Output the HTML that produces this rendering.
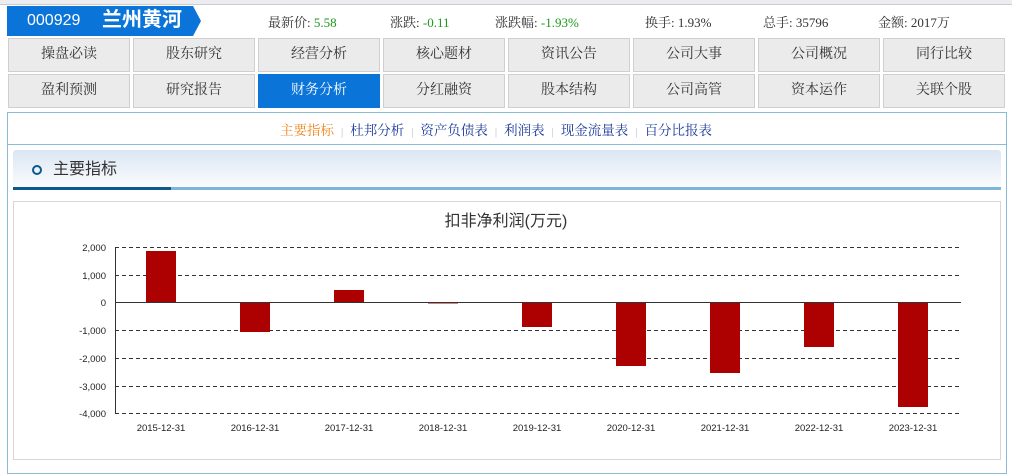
<!DOCTYPE html>
<html><head><meta charset="utf-8"><style>
*{margin:0;padding:0;box-sizing:border-box}
body{width:1012px;height:472px;background:#fff;font-family:"Liberation Serif","Noto Serif CJK SC",serif;position:relative;overflow:hidden}
.abs{position:absolute}
.top{left:0;top:0;width:1012px;height:5px;background:#ebedf0;border-bottom:1px solid #ccc}
.code{left:7px;top:6px;height:30px;width:186px;background:#0b74d8;color:#fff}
.arrow{left:193px;top:6px;width:0;height:0;border-top:15px solid transparent;border-bottom:15px solid transparent;border-left:8px solid #0b74d8}
.stat{top:12px;font-size:13px;color:#333}
.g{color:#1a9a1a}
.tab{width:122px;height:34px;background:#ebebeb;border:1px solid #cfcfcf;font-size:14px;color:#333;text-align:center;line-height:32px;font-family:"Liberation Serif","Noto Serif CJK SC",serif}
.tab.on{background:#0b74d8;color:#fff;border-color:#0b74d8}
.sub{font-size:13.5px;color:#1b3a9a;font-family:"Liberation Serif","Noto Serif CJK SC",serif}
.sep{color:#bbb;margin:0 7px;font-size:11px}
</style></head><body>
<div class="abs top"></div>
<div class="abs code"><span class="abs" style="left:20px;top:4px;line-height:22px;font-size:16px;font-family:'Liberation Sans',sans-serif">000929</span><span class="abs" style="left:95px;top:1px;line-height:26px;font-size:20px;font-weight:bold;font-family:'Liberation Sans','Noto Sans CJK SC',sans-serif">兰州黄河</span></div>
<div class="abs arrow"></div>
<div class="abs stat" style="left:268px">最新价: <span class="g">5.58</span></div>
<div class="abs stat" style="left:390px">涨跌: <span class="g">-0.11</span></div>
<div class="abs stat" style="left:495px">涨跌幅: <span class="g">-1.93%</span></div>
<div class="abs stat" style="left:645px">换手: 1.93%</div>
<div class="abs stat" style="left:763px">总手: 35796</div>
<div class="abs stat" style="left:878px">金额: 2017万</div>

<div class="abs tab" style="left:8px;top:38px">操盘必读</div>
<div class="abs tab" style="left:133px;top:38px">股东研究</div>
<div class="abs tab" style="left:258px;top:38px">经营分析</div>
<div class="abs tab" style="left:383px;top:38px">核心题材</div>
<div class="abs tab" style="left:508px;top:38px">资讯公告</div>
<div class="abs tab" style="left:633px;top:38px">公司大事</div>
<div class="abs tab" style="left:758px;top:38px">公司概况</div>
<div class="abs tab" style="left:883px;top:38px">同行比较</div>
<div class="abs tab" style="left:8px;top:74px">盈利预测</div>
<div class="abs tab" style="left:133px;top:74px">研究报告</div>
<div class="abs tab on" style="left:258px;top:74px">财务分析</div>
<div class="abs tab" style="left:383px;top:74px">分红融资</div>
<div class="abs tab" style="left:508px;top:74px">股本结构</div>
<div class="abs tab" style="left:633px;top:74px">公司高管</div>
<div class="abs tab" style="left:758px;top:74px">资本运作</div>
<div class="abs tab" style="left:883px;top:74px">关联个股</div>

<div class="abs" style="left:7px;top:112px;width:1000px;height:362px;border:1px solid #8bbcd6"></div>
<div class="abs" style="left:8px;top:144px;width:998px;height:1px;background:#8bbcd6"></div>
<div class="abs sub" style="left:280px;top:119px"><span style="color:#f08519">主要指标</span><span class="sep">|</span>杜邦分析<span class="sep">|</span>资产负债表<span class="sep">|</span>利润表<span class="sep">|</span>现金流量表<span class="sep">|</span>百分比报表</div>

<div class="abs" style="left:13px;top:150px;width:988px;height:38px;background:linear-gradient(#dbe6f3,#fbfcfe);border-radius:3px 3px 0 0"></div>
<div class="abs" style="left:13px;top:187px;width:988px;height:3px;background:#7fb5d8"></div>
<div class="abs" style="left:13px;top:187px;width:158px;height:3px;background:#0a5a8e"></div>
<div class="abs" style="left:32px;top:165px;width:10px;height:10px;border:2px solid #0a5a8e;border-radius:50%"></div>
<div class="abs" style="left:53px;top:159px;line-height:22px;font-size:16px;color:#333;font-family:'Liberation Sans','Noto Sans CJK SC',sans-serif">主要指标</div>

<div class="abs" style="left:13px;top:201px;width:988px;height:259px;border:1px solid #d6d6d6"></div>
<svg class="abs" style="left:0;top:0" width="1012" height="472" font-family="Liberation Sans, sans-serif">
<text x="506" y="226" font-size="16" text-anchor="middle" fill="#333" font-family="Liberation Sans, Noto Sans CJK SC, sans-serif">扣非净利润(万元)</text>
<g stroke="#333" stroke-width="1" stroke-dasharray="4,3">
<line x1="115" y1="247.5" x2="960" y2="247.5"/><line x1="115" y1="275.5" x2="960" y2="275.5"/>
<line x1="115" y1="330.5" x2="960" y2="330.5"/><line x1="115" y1="358.5" x2="960" y2="358.5"/>
<line x1="115" y1="386.5" x2="960" y2="386.5"/><line x1="115" y1="413.5" x2="960" y2="413.5"/>
</g>
<g fill="#ad0000">
<rect x="146" y="251" width="30" height="51"/>
<rect x="240" y="302" width="30" height="30"/>
<rect x="334" y="290" width="30" height="12"/>
<rect x="428" y="302" width="30" height="1.5"/>
<rect x="522" y="302" width="30" height="25"/>
<rect x="616" y="302" width="30" height="64"/>
<rect x="710" y="302" width="30" height="71"/>
<rect x="804" y="302" width="30" height="45"/>
<rect x="898" y="302" width="30" height="105"/>
</g>
<line x1="115" y1="302.5" x2="961" y2="302.5" stroke="#333"/>
<line x1="115.5" y1="247" x2="115.5" y2="414" stroke="#333"/>
<g font-size="9.5" fill="#222" text-anchor="end">
<text x="106" y="251">2,000</text><text x="106" y="279">1,000</text><text x="106" y="306">0</text>
<text x="106" y="334">-1,000</text><text x="106" y="362">-2,000</text><text x="106" y="390">-3,000</text><text x="106" y="417">-4,000</text>
</g>
<g font-size="9.5" fill="#222" text-anchor="middle">
<text x="161" y="431">2015-12-31</text><text x="255" y="431">2016-12-31</text><text x="349" y="431">2017-12-31</text>
<text x="443" y="431">2018-12-31</text><text x="537" y="431">2019-12-31</text><text x="631" y="431">2020-12-31</text>
<text x="725" y="431">2021-12-31</text><text x="819" y="431">2022-12-31</text><text x="913" y="431">2023-12-31</text>
</g>
</svg>
</body></html>
